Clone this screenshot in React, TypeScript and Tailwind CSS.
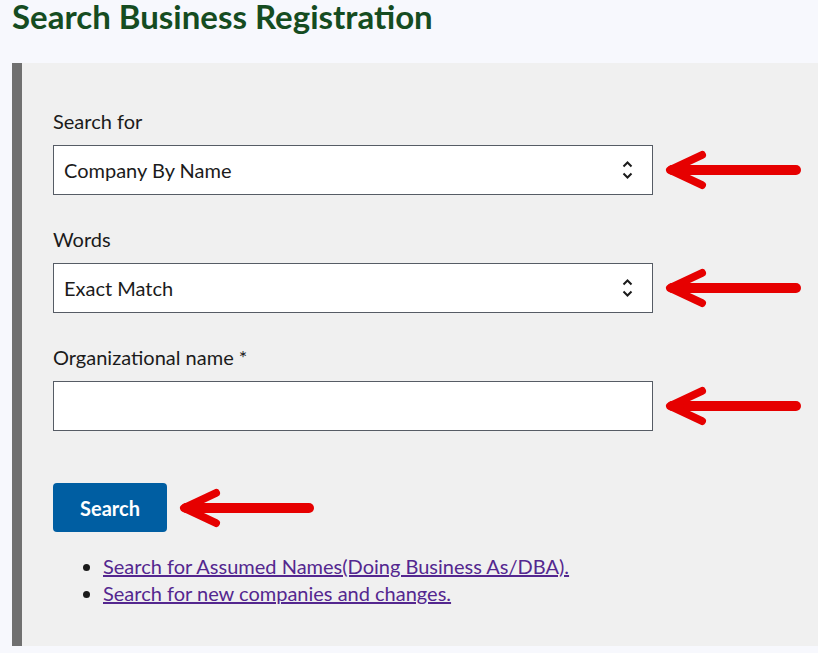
import React from 'react';

const font = { fontFamily: 'Lato, "Liberation Sans", sans-serif' };

// red pointer arrow drawn next to each field
function Pointer({ width = 140 }: { width?: number }) {
  return (
    <svg width={width} height="40" viewBox={`0 0 ${width} 40`} className="shrink-0">
      <line x1="8" y1="20" x2={width - 8} y2="20" stroke="#e60000" strokeWidth="10" strokeLinecap="round" />
      <polyline points="38,5 6,20 38,35" fill="none" stroke="#e60000" strokeWidth="8" strokeLinecap="round" strokeLinejoin="round" />
    </svg>
  );
}

function UpDown() {
  return (
    <svg width="11" height="20" viewBox="0 0 11 20" className="absolute right-[19px] top-1/2 -translate-y-1/2">
      <polyline points="1.5,6.5 5.5,2.5 9.5,6.5" fill="none" stroke="#1b1b1b" strokeWidth="2" />
      <polyline points="1.5,13.5 5.5,17.5 9.5,13.5" fill="none" stroke="#1b1b1b" strokeWidth="2" />
    </svg>
  );
}

function FieldLabel({ children }: { children: React.ReactNode }) {
  return <div className="pt-[2px] mb-[12px] text-[20px] leading-[24px] text-[#1b1b1b]">{children}</div>;
}

function SelectField({ label, value }: { label: string; value: string }) {
  return (
    <div className="mt-[30px]">
      <FieldLabel>{label}</FieldLabel>
      <div className="flex items-center gap-[11px]">
        <div className="relative w-[600px] h-[50px] bg-white border border-[#565c65] flex items-center pl-[10px] text-[20px] text-[#1b1b1b]">
          {value}
          <UpDown />
        </div>
        <Pointer />
      </div>
    </div>
  );
}

export default function App() {
  return (
    <div className="min-h-screen bg-[#f7f8fd]" style={font}>
      <h1 className="px-3 text-[33px] leading-[32px] font-bold text-[#154c21]">Search Business Registration</h1>
      <div className="mt-[31px] ml-3 border-l-[10px] border-[#707070] bg-[#f0f0f0] pl-[31px] pt-[14px] pb-[39px]">
        <SelectField label="Search for" value="Company By Name" />
        <SelectField label="Words" value="Exact Match" />
        <div className="mt-[30px]">
          <FieldLabel>Organizational name *</FieldLabel>
          <div className="flex items-center gap-[11px]">
            <div className="w-[600px] h-[50px] bg-white border border-[#565c65]" />
            <Pointer />
          </div>
        </div>
        <div className="mt-[52px] flex items-center gap-[11px]">
          <button className="w-[114px] h-[49px] rounded-[4px] bg-[#005ea2] text-white text-[20px] font-bold">Search</button>
          <Pointer width={139} />
        </div>
        <ul className="mt-[21px] list-disc pl-[50px] text-[20px] leading-[27px] text-[#54278f] marker:text-[#1b1b1b]">
          <li><a href="#" className="underline">Search for Assumed Names(Doing Business As/DBA).</a></li>
          <li><a href="#" className="underline">Search for new companies and changes.</a></li>
        </ul>
      </div>
    </div>
  );
}
